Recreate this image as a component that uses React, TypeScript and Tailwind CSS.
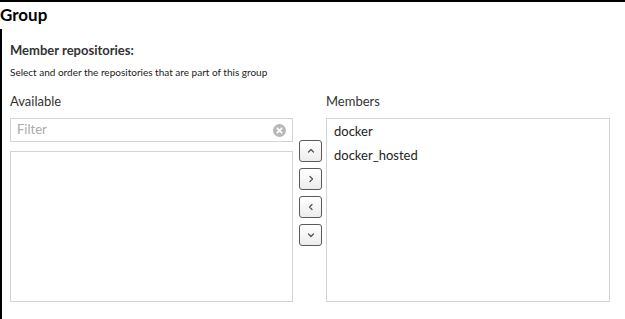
import React from 'react';

const font = { fontFamily: 'Lato, "Open Sans", sans-serif' };

function Chevron({ dir }: { dir: 'up' | 'down' | 'left' | 'right' }) {
  const paths: Record<string, string> = {
    up: 'M2.5 6 L5 3.5 L7.5 6',
    down: 'M2.5 4 L5 6.5 L7.5 4',
    right: 'M4 2.5 L6.5 5 L4 7.5',
    left: 'M6 2.5 L3.5 5 L6 7.5',
  };
  return (
    <svg width="10" height="10" viewBox="0 0 10 10" fill="none">
      <path d={paths[dir]} stroke="#555" strokeWidth="1.3" strokeLinecap="round" strokeLinejoin="round" />
    </svg>
  );
}

function MoveButton({ dir }: { dir: 'up' | 'down' | 'left' | 'right' }) {
  return (
    <button className="flex h-[22px] w-[23px] items-center justify-center rounded-[3px] border border-[#5a5a5a] bg-gradient-to-b from-white to-[#ececec]">
      <Chevron dir={dir} />
    </button>
  );
}

export default function App() {
  const members = ['docker', 'docker_hosted'];

  return (
    <div className="h-[319px] w-[625px] overflow-hidden bg-white text-[#333]" style={font}>
      <div className="h-full border-l-2 border-t-2 border-black">
        {/* Title */}
        <div className="-ml-[2px] h-[27px] bg-white pt-[2px]">
          <h1 className="text-[17px] font-bold leading-[22px] text-black">Group</h1>
        </div>

        <div className="pl-[8px] pr-[15px]">
          <h2 className="mt-[13px] text-[13px] font-bold leading-[16px] text-[#333]">Member repositories:</h2>
          <p className="mt-[8px] text-[10px] leading-[12px] text-[#222]">
            Select and order the repositories that are part of this group
          </p>

          <div className="mt-[15px] flex">
            {/* Available */}
            <div className="w-[283px]">
              <div className="text-[13px] leading-[16px] text-[#333]">Available</div>
              <div className="mt-[9px] flex h-[24px] items-center justify-between border border-[#d4d4d4] px-[6px]">
                <span className="text-[13px] text-[#aaa]">Filter</span>
                <svg width="13" height="13" viewBox="0 0 13 13">
                  <circle cx="6.5" cy="6.5" r="6.5" fill="#b8b8b8" />
                  <path d="M4.3 4.3 L8.7 8.7 M8.7 4.3 L4.3 8.7" stroke="white" strokeWidth="1.8" strokeLinecap="round" />
                </svg>
              </div>
              <div className="mt-[9px] h-[151px] border border-[#d4d4d4]" />
            </div>

            {/* Buttons */}
            <div className="ml-[6px] flex w-[27px] flex-col gap-[6px] pt-[47px]">
              <MoveButton dir="up" />
              <MoveButton dir="right" />
              <MoveButton dir="left" />
              <MoveButton dir="down" />
            </div>

            {/* Members */}
            <div className="w-[284px]">
              <div className="text-[13px] leading-[16px] text-[#333]">Members</div>
              <div className="mt-[9px] h-[184px] border border-[#d4d4d4] px-[7px]">
                {members.map((m) => (
                  <div key={m} className="text-[13px] leading-[24px] text-[#222]">
                    {m}
                  </div>
                ))}
              </div>
            </div>
          </div>
        </div>
      </div>
    </div>
  );
}
